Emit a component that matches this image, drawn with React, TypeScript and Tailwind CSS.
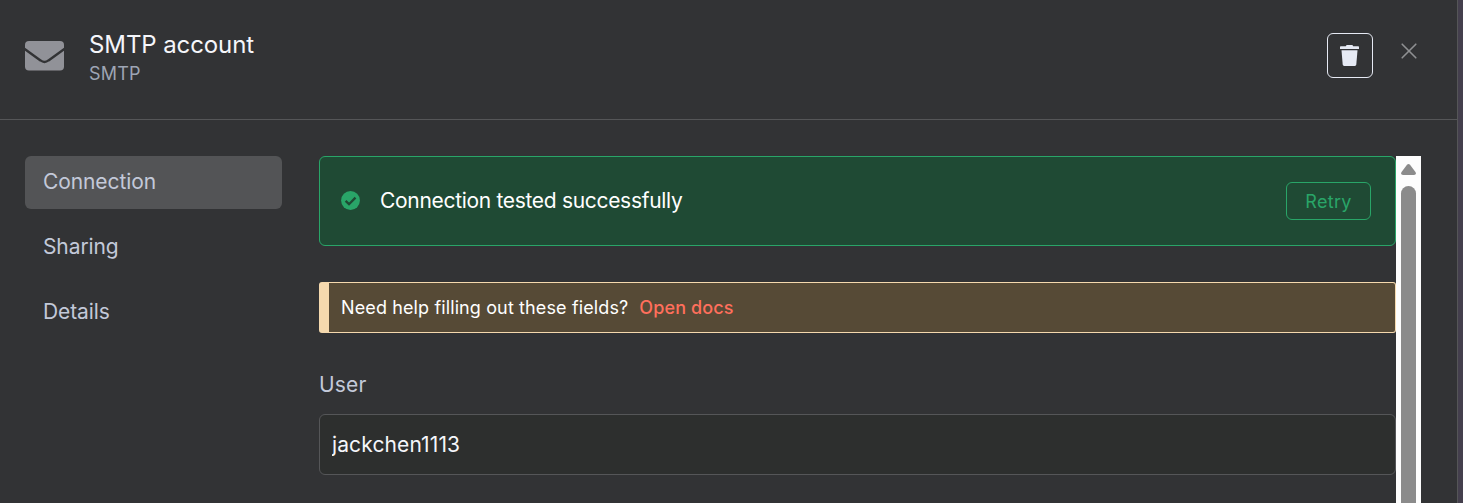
import React, { useState } from 'react';

const menuItems = ['Connection', 'Sharing', 'Details'];

const EnvelopeIcon: React.FC = () => (
  <svg width="39" height="30" viewBox="0 0 39 30" fill="none" className="mt-px shrink-0">
    <rect width="39" height="29.5" rx="4" fill="#919298" />
    <path d="M-1 7.6 L15.5 19.4 Q19.500 22.400 23.500 19.400 L40 7.6" stroke="#323335" strokeWidth="2.4" />
  </svg>
);

const TrashIcon: React.FC = () => (
  <svg width="19" height="21" viewBox="0 0 19 21" fill="#e6eaf4">
    <path d="M6.600 0h5.800l.8 1.200h4.800c.6 0 1 .4 1 1V4H0V2.200c0-.6.4-1 1-1h4.800z" />
    <path d="M1.500 5.200h16L16.300 19.600c-.1.8-.7 1.400-1.500 1.400H4.200c-.8 0-1.400-.6-1.500-1.400z" />
  </svg>
);

const CloseIcon: React.FC = () => (
  <svg width="16" height="16" viewBox="0 0 16 16" stroke="#8f9092" strokeWidth="1.6" strokeLinecap="round">
    <path d="M1.200 1.200 14.800 14.800M14.800 1.200 1.200 14.800" />
  </svg>
);

const CheckIcon: React.FC = () => (
  <svg width="19" height="19" viewBox="0 0 19 19" fill="none" className="-mt-px shrink-0">
    <circle cx="9.500" cy="9.500" r="9.400" fill="#29a568" />
    <path d="M4.600 9.900 8 13.200 14.500 6.600" stroke="#1f4a34" strokeWidth="2.300" />
  </svg>
);

const Header: React.FC = () => (
  <header className="flex h-[120px] items-start border-b border-[#555658] pl-[25px]">
    <div className="mt-10">
      <EnvelopeIcon />
    </div>
    <div className="ml-[25px] mt-[29px]">
      <h1 className="text-2xl leading-8 tracking-[-0.1px] text-[#f5f6fa]">SMTP account</h1>
      <p className="text-lg leading-[26px] tracking-[0.2px] text-[#9ea5b4]">SMTP</p>
    </div>
    <button className="ml-auto mt-[33px] flex h-[45px] w-[46px] items-center justify-center rounded-md border border-[#e6eaf4] pr-px">
      <TrashIcon />
    </button>
    <button className="ml-7 mr-10 mt-[43px]">
      <CloseIcon />
    </button>
  </header>
);

const Scrollbar: React.FC = () => (
  <div className="flex w-[25px] shrink-0 flex-col items-center bg-[#fdfdfd] pt-2">
    <svg width="15" height="11" viewBox="0 0 15 11" fill="#8b8b8b" className="shrink-0">
      <path d="M6 .8Q7.500-.6 9 .8L14.600 8.200Q15.600 11 13 11H2Q-.6 11 .4 8.200z" />
    </svg>
    <div className="-mb-3 mt-[11px] w-[15px] grow rounded-full bg-[#8b8b8b]" />
  </div>
);

const App: React.FC = () => {
  const [active, setActive] = useState('Connection');
  const [user, setUser] = useState('jackchen1113');

  return (
    <div className="h-[503px] overflow-hidden bg-[#443f4d] pr-[5px] font-['Inter',sans-serif]">
      <div className="flex h-full flex-col border-r border-[#555658] bg-[#323335]">
        <Header />
        <div className="flex min-h-0 grow pl-[25px] pr-9 pt-9">
          <nav className="flex w-[257px] shrink-0 flex-col gap-3">
            {menuItems.map(item => (
              <button
                key={item}
                onClick={() => setActive(item)}
                className={`h-[53px] rounded-md px-[18px] pb-0.5 text-left text-[21px] tracking-[-0.1px] text-[#c3c9d9] ${
                  active === item ? 'bg-[#535456]' : ''
                }`}
              >
                {item}
              </button>
            ))}
          </nav>

          <main className="ml-[37px] flex min-w-0 grow flex-col">
            <div className="flex h-[90px] shrink-0 items-center rounded-md border border-[#29a568] bg-[#1f4a34] pl-[21px] pr-6">
              <CheckIcon />
              <span className="ml-5 text-[21px] tracking-[-0.31px] text-white">Connection tested successfully</span>
              <button className="ml-auto h-[38px] w-[85px] rounded-md border border-[#29a568] pt-0.5 text-lg tracking-[0.3px] text-[#29a568]">
                Retry
              </button>
            </div>

            <div className="mt-9 flex h-[51px] shrink-0 items-center rounded-[3px] border border-l-[10px] border-[#f5d9ae] bg-[#564a36] pl-3 text-lg text-white">
              <span className="tracking-[0.12px]">Need help filling out these fields?</span>
              <a href="#" className="ml-[11px] font-medium tracking-[0.1px] text-[#ff6f5c]">Open docs</a>
            </div>

            <label htmlFor="user" className="mt-[37px] text-[21px] leading-[30px] tracking-[0.2px] text-[#c3c9d9]">User</label>
            <input
              id="user"
              value={user}
              onChange={e => setUser(e.target.value)}
              className="mt-[14px] h-[61px] shrink-0 rounded-md border border-[#555658] bg-[#2d2f2e] px-3 text-[21px] tracking-[0.12px] text-[#f5f6fa] outline-none"
            />
          </main>
          <Scrollbar />
        </div>
      </div>
    </div>
  );
};

export default App;
